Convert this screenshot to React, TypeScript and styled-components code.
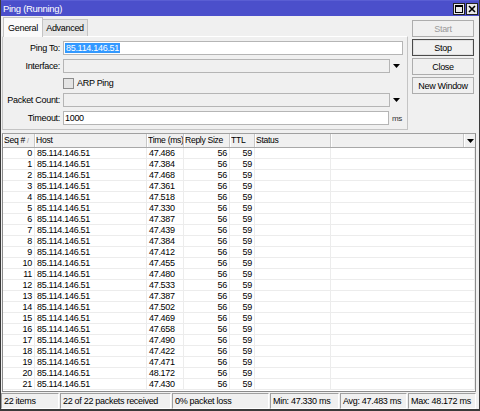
import React from "react";
import styled, { createGlobalStyle, css } from "styled-components";

const Global = createGlobalStyle`
  html, body { margin: 0; padding: 0; background: #f0f0f0; }
  body { font-family: "Liberation Sans", Arial, sans-serif; font-size: 9px; letter-spacing: -0.3px; color: #000; }
  * { box-sizing: border-box; }
`;

const Window = styled.div`
  width: 480px;
  height: 411px;
  background: #f0f0f0;
  border-left: 1px solid #3a3a3a;
  border-right: 1px solid #3a3a3a;
  border-bottom: 2px solid #3a3a3a;
  display: flex;
  flex-direction: column;
  overflow: hidden;
`;

const TitleBar = styled.div`
  height: 16px;
  margin: 0 -1px;
  background: #4b4fcb;
  border-top: 1px solid #5a5ed4;
  display: flex;
  align-items: center;
  justify-content: space-between;
  padding: 0 2px 0 3px;
  color: #fff;
  flex: none;
`;

const Title = styled.span`
  font-size: 9.5px;
  line-height: 14px;
`;

const WinControls = styled.div`
  display: flex;
  gap: 1px;
`;

const WinButton = styled.div`
  width: 12px;
  height: 12px;
  background: #e8e8e8;
  border: 1px solid #222;
  display: flex;
  align-items: center;
  justify-content: center;
`;

const Top = styled.div`
  display: flex;
  height: 116px;
  padding: 1px 0 0 1px;
  flex: none;
`;

const TabArea = styled.div`
  width: 406px;
  display: flex;
  flex-direction: column;
`;

const TabStrip = styled.div`
  display: flex;
  align-items: flex-end;
  height: 19px;
  padding-left: 1px;
`;

const Tab = styled.div<{ $active?: boolean }>`
  padding: 0 5px;
  border: 1px solid #c4c4c4;
  border-bottom: none;
  display: flex;
  align-items: center;
  justify-content: center;
  ${(p) =>
    p.$active
      ? css`
          height: 20px;
          width: 40px;
          background: #fafafa;
          margin-bottom: -1px;
          position: relative;
          z-index: 1;
          padding-top: 1px;
        `
      : css`
          height: 17px;
          width: 45px;
          background: #e6e6e6;
          border-left: none;
        `}
`;

const Panel = styled.div`
  flex: 1;
  margin-bottom: 2px;
  border: 1px solid #c4c4c4;
  border-top-color: #fff;
  background: #f0f0f0;
  padding: 4px 4px 0 0;
  display: grid;
  grid-template-columns: 57px 1fr;
  grid-auto-rows: min-content;
  column-gap: 3px;
  row-gap: 4px;
`;

const Label = styled.div`
  text-align: right;
  line-height: 14px;
  height: 14px;
  white-space: nowrap;
`;

const TextInput = styled.div<{ $short?: boolean }>`
  height: 14px;
  background: #fff;
  border: 1px solid #b5b5b5;
  line-height: 12px;
  padding-left: 1px;
  white-space: nowrap;
  ${(p) => p.$short && css`flex: 1;`}
`;

const Selected = styled.span`
  background: #3399ff;
  color: #fff;
  padding: 0 1px;
`;

const FieldRow = styled.div`
  display: flex;
  align-items: center;
  height: 14px;
`;

const SelectBox = styled.div`
  flex: 1;
  height: 14px;
  background: #f0f0f0;
  border: 1px solid #b5b5b5;
`;

const Arrow = styled.div`
  width: 13px;
  display: flex;
  justify-content: center;
  align-items: center;
`;

const Unit = styled.div`
  width: 14px;
  padding-left: 3px;
  font-size: 8px;
  color: #333;
`;

const CheckRow = styled.div`
  grid-column: 2;
  display: flex;
  align-items: center;
  gap: 3px;
  height: 12px;
`;

const Check = styled.div`
  width: 11px;
  height: 11px;
  border: 1px solid #8c8c8c;
  background: #e4e4e4;
`;

const ButtonCol = styled.div`
  margin-left: 4px;
  padding-top: 3px;
  width: 62px;
  display: flex;
  flex-direction: column;
  gap: 2px;
`;

const Button = styled.div<{ $disabled?: boolean; $default?: boolean }>`
  height: 17px;
  border: 1px solid #adadad;
  background: #f0f0f0;
  display: flex;
  align-items: center;
  justify-content: center;
  color: ${(p) => (p.$disabled ? "#9a9a9a" : "#000")};
  ${(p) => p.$default && css`border-color: #4a4a4a; box-shadow: inset 0 0 0 1px #e0e0e0;`}
`;

const cols = "32px 112px 37px 46px 25px 76px 1fr";

const Table = styled.div`
  margin: 1px 3px 0 1px;
  border: 1px solid #8a8a8a;
  border-top-color: #a0a0a0;
  background: #fff;
  flex: none;
  height: 259px;
  overflow: hidden;
`;

const HeaderRow = styled.div`
  display: grid;
  grid-template-columns: ${cols} 11px;
  height: 14px;
  background: #f0f0f0;
  border-bottom: 1px solid #a8a8a8;
`;

const HeadCell = styled.div`
  border-right: 1px solid #c8c8c8;
  border-left: 1px solid #fff;
  padding-left: 0;
  font-size: 8.6px;
  line-height: 13px;
  white-space: nowrap;
  overflow: hidden;
  display: flex;
  align-items: center;
  justify-content: flex-start;
`;

const SortMark = styled.span`
  color: #999;
  font-size: 7px;
  margin-left: 2px;
`;

const DropCell = styled.div`
  display: flex;
  align-items: center;
  justify-content: center;
  border-left: 1px solid #fff;
`;

const Row = styled.div`
  display: grid;
  grid-template-columns: ${cols};
  height: 11px;
  border-bottom: 1px solid #ececec;
`;

const Cell = styled.div<{ $right?: boolean }>`
  border-right: 1px solid #ececec;
  line-height: 10px;
  white-space: nowrap;
  overflow: hidden;
  padding: 0 2px;
  text-align: ${(p) => (p.$right ? "right" : "left")};
`;

const StatusBar = styled.div`
  display: flex;
  gap: 1px;
  padding: 1px 0 0 0;
  height: 18px;
  flex: none;
`;

const Segment = styled.div<{ $w: number }>`
  width: ${(p) => p.$w}px;
  height: 16px;
  border: 1px solid #a0a0a0;
  border-right-color: #fff;
  border-bottom-color: #fff;
  padding-left: 2px;
  line-height: 14px;
  white-space: nowrap;
  overflow: hidden;
`;

const DownTri = () => (
  <svg width="7" height="4" viewBox="0 0 7 4">
    <path d="M0 0H7L3.5 4Z" fill="#000" />
  </svg>
);

const times = [
  "47.486", "47.384", "47.468", "47.361", "47.518", "47.330", "47.387", "47.439",
  "47.384", "47.412", "47.455", "47.480", "47.533", "47.387", "47.502", "47.469",
  "47.658", "47.490", "47.422", "47.471", "48.172", "47.430",
];

export default function App() {
  return (
    <>
      <Global />
      <Window>
        <TitleBar>
          <Title>Ping (Running)</Title>
          <WinControls>
            <WinButton>
              <svg width="8" height="8" viewBox="0 0 8 8">
                <rect x="0.5" y="0.5" width="7" height="7" fill="none" stroke="#000" />
                <rect x="0.5" y="0.5" width="7" height="1.5" fill="#000" />
              </svg>
            </WinButton>
            <WinButton>
              <svg width="8" height="8" viewBox="0 0 8 8">
                <path d="M1 1L7 7M7 1L1 7" stroke="#000" strokeWidth="1.6" />
              </svg>
            </WinButton>
          </WinControls>
        </TitleBar>
        <Top>
          <TabArea>
            <TabStrip>
              <Tab $active>General</Tab>
              <Tab>Advanced</Tab>
            </TabStrip>
            <Panel>
              <Label>Ping To:</Label>
              <TextInput>
                <Selected>85.114.146.51</Selected>
              </TextInput>
              <Label>Interface:</Label>
              <FieldRow>
                <SelectBox />
                <Arrow>
                  <DownTri />
                </Arrow>
              </FieldRow>
              <CheckRow>
                <Check />
                <span>ARP Ping</span>
              </CheckRow>
              <Label>Packet Count:</Label>
              <FieldRow>
                <SelectBox />
                <Arrow>
                  <DownTri />
                </Arrow>
              </FieldRow>
              <Label>Timeout:</Label>
              <FieldRow>
                <TextInput $short>1000</TextInput>
                <Unit>ms</Unit>
              </FieldRow>
            </Panel>
          </TabArea>
          <ButtonCol>
            <Button $disabled>Start</Button>
            <Button $default>Stop</Button>
            <Button>Close</Button>
            <Button>New Window</Button>
          </ButtonCol>
        </Top>
        <Table>
          <HeaderRow>
            <HeadCell>
              Seq #<SortMark>/</SortMark>
            </HeadCell>
            <HeadCell>Host</HeadCell>
            <HeadCell>Time (ms)</HeadCell>
            <HeadCell>Reply Size</HeadCell>
            <HeadCell>TTL</HeadCell>
            <HeadCell>Status</HeadCell>
            <HeadCell />
            <DropCell>
              <DownTri />
            </DropCell>
          </HeaderRow>
          {times.map((t, i) => (
            <Row key={i}>
              <Cell $right>{i}</Cell>
              <Cell>85.114.146.51</Cell>
              <Cell>{t}</Cell>
              <Cell $right>56</Cell>
              <Cell $right>59</Cell>
              <Cell />
              <Cell />
            </Row>
          ))}
        </Table>
        <StatusBar>
          <Segment $w={58}>22 items</Segment>
          <Segment $w={111}>22 of 22 packets received</Segment>
          <Segment $w={97}>0% packet loss</Segment>
          <Segment $w={69}>Min: 47.330 ms</Segment>
          <Segment $w={67}>Avg: 47.483 ms</Segment>
          <Segment $w={68}>Max: 48.172 ms</Segment>
        </StatusBar>
      </Window>
    </>
  );
}
